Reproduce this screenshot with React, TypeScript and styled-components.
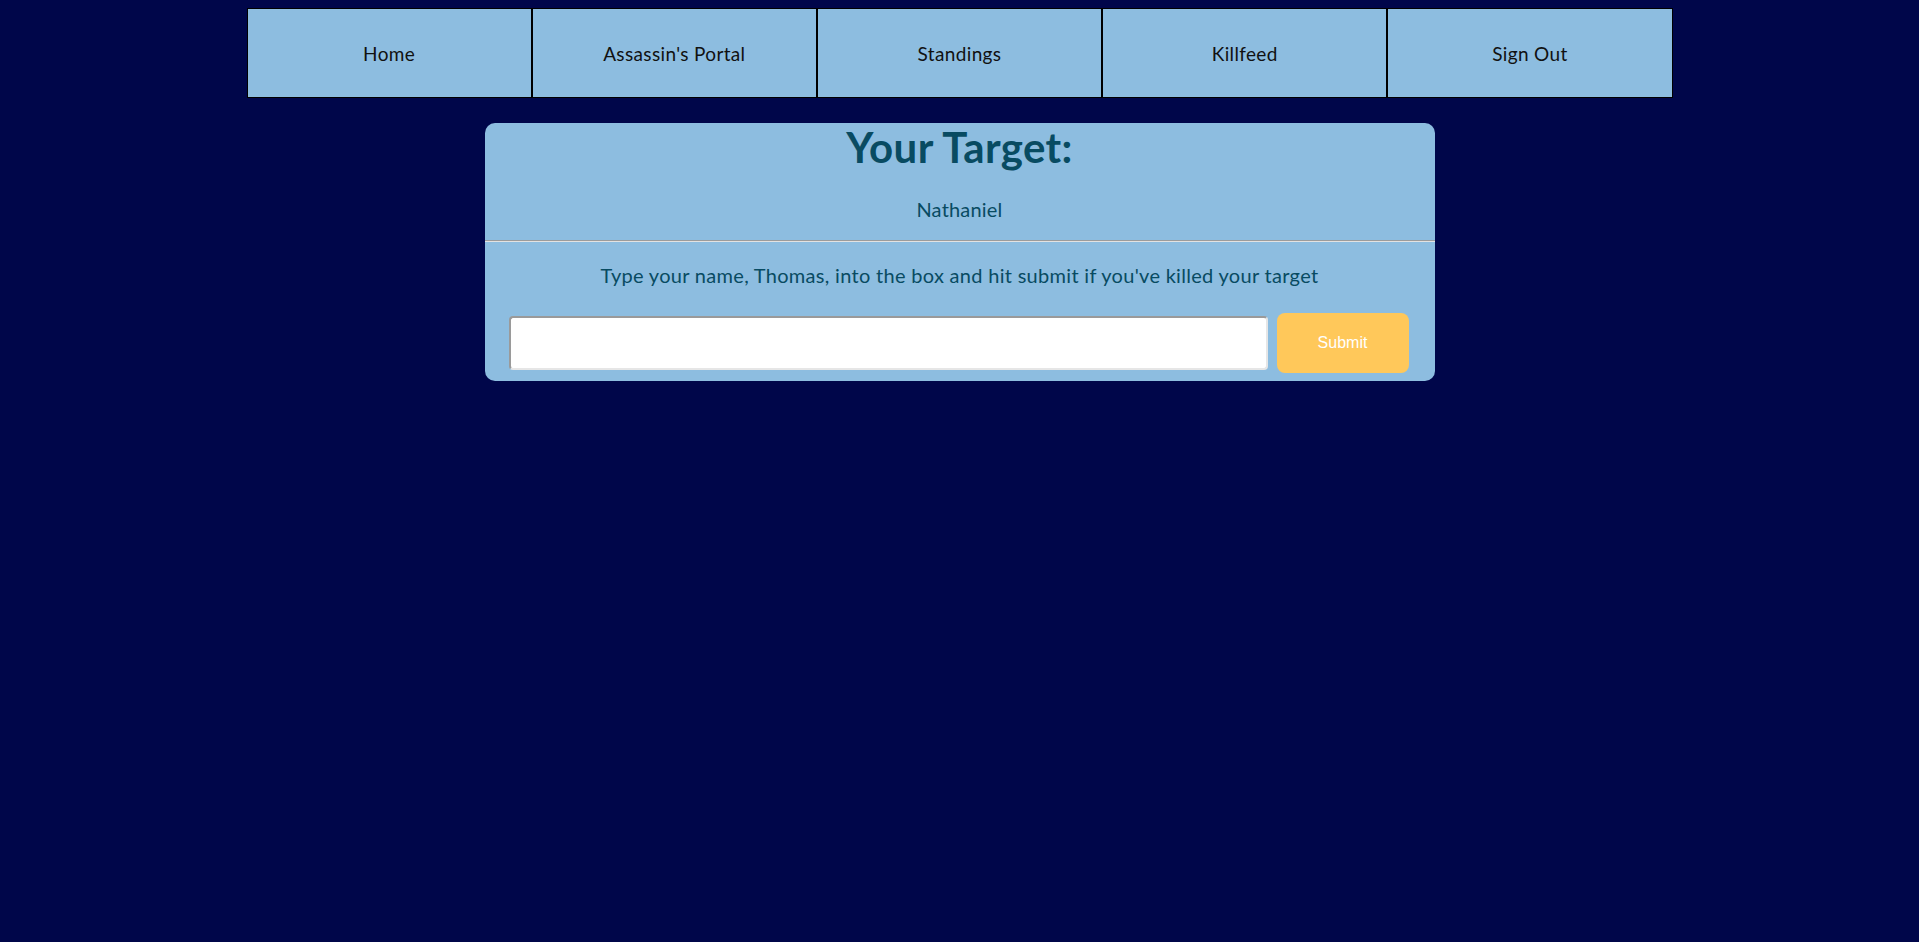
import React from "react";
import styled, { createGlobalStyle } from "styled-components";

const Global = createGlobalStyle`
  html, body {
    background: #00064a;
  }
  body {
    margin: 8px;
    font-family: Lato, "Open Sans", sans-serif;
  }
`;

const Page = styled.div`
  display: flex;
  flex-direction: column;
  align-items: center;
`;

const Nav = styled.nav`
  display: flex;
  width: 1426px;
  height: 90px;
`;

const NavItem = styled.a`
  flex: 1;
  display: flex;
  align-items: center;
  justify-content: center;
  background: #8dbde0;
  border: 1px solid #000;
  color: #111;
  font-family: Lato, sans-serif;
  font-size: 19px;
  letter-spacing: 0.35px;
  text-decoration: none;
  cursor: pointer;
`;

const Card = styled.section`
  width: 950px;
  margin-top: 25px;
  background: #8dbde0;
  border-radius: 10px;
  padding-bottom: 8px;
  color: #084b62;
  text-align: center;
`;

const Title = styled.h1`
  margin: 0;
  font-size: 42px;
  line-height: 48px;
  font-weight: 700;
  letter-spacing: 0.4px;
`;

const Name = styled.p`
  margin: 26px 0 19px;
  font-size: 20px;
  line-height: 24px;
  letter-spacing: 0.2px;
`;

const Rule = styled.hr`
  margin: 0;
  border: none;
  border-top: 1px solid #9c9c9c;
  border-bottom: 1px solid #e2e2e2;
`;

const Instruction = styled.p`
  margin: 21px 0 26px;
  font-size: 20px;
  line-height: 24px;
  letter-spacing: 0.3px;
`;

const FormRow = styled.form`
  display: flex;
  align-items: center;
  gap: 9px;
  padding: 0 26px 0 24px;
`;

const TextInput = styled.input`
  flex: 1;
  height: 54px;
  box-sizing: border-box;
  border: 2px solid;
  border-color: #9a9a9a #e6e6e6 #e6e6e6 #9a9a9a;
  border-radius: 4px;
  background: #fff;
  outline: none;
`;

const SubmitButton = styled.button`
  width: 132px;
  height: 60px;
  border: none;
  border-radius: 8px;
  background: #ffc85a;
  color: #fff;
  font-family: "Liberation Sans", Arial, sans-serif;
  font-size: 16px;
  cursor: pointer;
`;

const links = ["Home", "Assassin's Portal", "Standings", "Killfeed", "Sign Out"];

export default function App() {
  return (
    <>
      <Global />
      <Page>
        <Nav>
          {links.map((l) => (
            <NavItem key={l}>{l}</NavItem>
          ))}
        </Nav>
        <Card>
          <Title>Your Target:</Title>
          <Name>Nathaniel</Name>
          <Rule />
          <Instruction>
            Type your name, Thomas, into the box and hit submit if you've killed your target
          </Instruction>
          <FormRow onSubmit={(e) => e.preventDefault()}>
            <TextInput type="text" />
            <SubmitButton type="submit">Submit</SubmitButton>
          </FormRow>
        </Card>
      </Page>
    </>
  );
}
